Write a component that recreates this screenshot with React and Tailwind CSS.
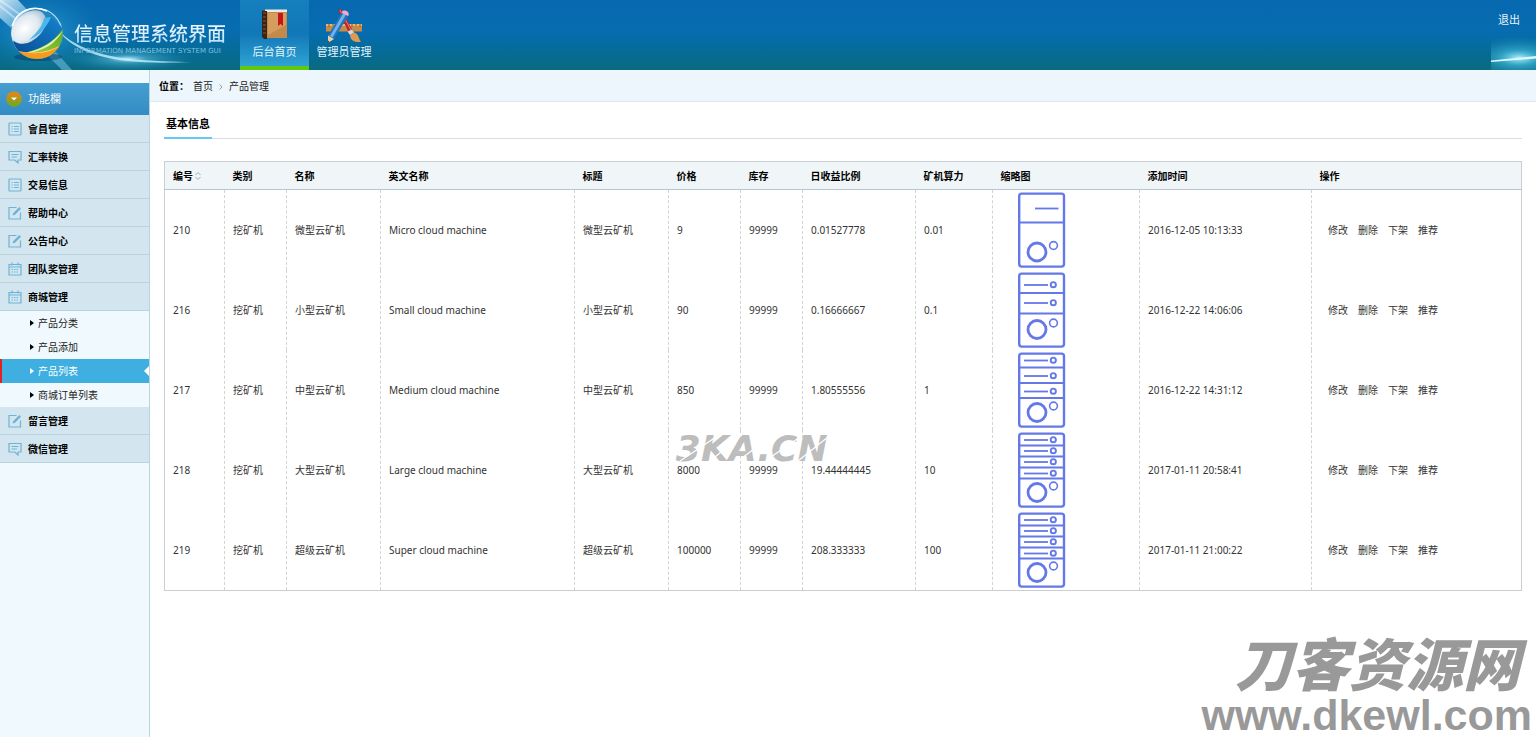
import React, { useState } from 'react'

const menu = [
  { title: '會員管理', icon: 'list' },
  { title: '汇率转换', icon: 'comment' },
  { title: '交易信息', icon: 'list' },
  { title: '帮助中心', icon: 'edit' },
  { title: '公告中心', icon: 'edit' },
  { title: '团队奖管理', icon: 'calendar' },
  {
    title: '商城管理',
    icon: 'calendar',
    children: ['产品分类', '产品添加', '产品列表', '商城订单列表'],
  },
  { title: '留言管理', icon: 'edit' },
  { title: '微信管理', icon: 'comment' },
];

const columns = [
  { label: '编号', width: 'w-[60px]' },
  { label: '类别', width: 'w-[62px]' },
  { label: '名称', width: 'w-[94px]' },
  { label: '英文名称', width: 'w-[194px]' },
  { label: '标题', width: 'w-[94px]' },
  { label: '价格', width: 'w-[72px]' },
  { label: '库存', width: 'w-[62px]' },
  { label: '日收益比例', width: 'w-[113px]' },
  { label: '矿机算力', width: 'w-[77px]' },
  { label: '缩略图', width: 'w-[147px]' },
  { label: '添加时间', width: 'w-[172px]' },
  { label: '操作', width: 'w-[210px]' },
];

const products = [
  { id: 210, name: '微型云矿机', en: 'Micro cloud machine', price: '9', rate: '0.01527778', power: '0.01', time: '2016-12-05 10:13:33' },
  { id: 216, name: '小型云矿机', en: 'Small cloud machine', price: '90', rate: '0.16666667', power: '0.1', time: '2016-12-22 14:06:06' },
  { id: 217, name: '中型云矿机', en: 'Medium cloud machine', price: '850', rate: '1.80555556', power: '1', time: '2016-12-22 14:31:12' },
  { id: 218, name: '大型云矿机', en: 'Large cloud machine', price: '8000', rate: '19.44444445', power: '10', time: '2017-01-11 20:58:41' },
  { id: 219, name: '超级云矿机', en: 'Super cloud machine', price: '100000', rate: '208.333333', power: '100', time: '2017-01-11 21:00:22' },
];

// drive bays of each machine: divider lines, slot rows and fan positions
const machines = {
  210: { dividers: [32.5], slots: [], fan: 62, led: 55.5 },
  216: { dividers: [23, 43.5], slots: [15, 33], fan: 59.5, led: 53 },
  217: { dividers: [17.5, 33, 48], slots: [10.5, 26, 41.5], fan: 62.5, led: 56 },
  218: { dividers: [15.5, 26.5, 37.5, 48.5], slots: [10, 21, 32, 43.5], fan: 62.5, led: 56 },
  219: { dividers: [15.5, 26.5, 37.5, 48.5], slots: [10, 21, 32, 43.5], fan: 62.5, led: 56 },
};

const MachineIcon = ({ id }) => {
  const m = machines[id];
  return (
    <svg viewBox="0 0 80 80" className="block size-20" fill="none" stroke="#6478e8">
      <rect x="18.2" y="3.6" width="44.8" height="73" rx="2.5" strokeWidth="2.4" />
      {m.dividers.map(y => <path key={y} d={`M18 ${y}h45`} strokeWidth="2" />)}
      {m.slots.length === 0 && <path d="M34 18.5h23.5" strokeWidth="1.8" />}
      {m.slots.map(y => (
        <g key={y}>
          <path d={`M23 ${y}h24`} strokeWidth="1.8" />
          <circle cx="52.3" cy={y - 0.3} r="2.6" strokeWidth="1.9" />
        </g>
      ))}
      <circle cx="36" cy={m.fan} r="9" strokeWidth="2.8" />
      <circle cx="52.5" cy={m.led} r="3.9" strokeWidth="1.6" />
    </svg>
  );
};

const MenuIcon = ({ type }) => (
  <svg viewBox="0 0 14 14" className="size-3.5 shrink-0" fill="none" stroke="#6fb3d5" strokeWidth="1.2">
    {type === 'list' && (
      <>
        <rect x="1" y="1" width="12" height="12" rx="0.8" />
        <path d="M3.5 4.5h1.3M6 4.5h4.8M3.5 7h1.3M6 7h4.8M3.5 9.5h1.3M6 9.5h4.8" />
      </>
    )}
    {type === 'comment' && (
      <>
        <path d="M1 1.5h12v8.5h-3v3l-3.2-3H1z" />
        <path d="M3.5 4.5h7M3.5 7h5.5" />
      </>
    )}
    {type === 'edit' && (
      <>
        <path d="M8.5 1.5H1v11.5h11.5V6.5" />
        <path d="M4.5 9.5l.8-2.5 6-6 1.7 1.7-6 6z" fill="#6fb3d5" stroke="none" />
      </>
    )}
    {type === 'calendar' && (
      <>
        <path d="M1 2.5h12V13H1zM1 5h12M4 .5v3M10 .5v3" />
        <path d="M3.5 7.5h7M3.5 10h7" strokeDasharray="1.5 1" />
      </>
    )}
  </svg>
);

const Logo = () => (
  <svg viewBox="0 0 240 70" className="absolute left-0 top-0 h-[70px] w-60">
    <defs>
      <linearGradient id="beam" x1="0" y1="0" x2="1" y2="1">
        <stop offset="0" stopColor="#e6f6ff" stopOpacity="0.85" />
        <stop offset="1" stopColor="#6cc6ee" stopOpacity="0.15" />
      </linearGradient>
      <radialGradient id="glow">
        <stop offset="0" stopColor="#c9f4ff" stopOpacity="0.95" />
        <stop offset="0.3" stopColor="#5fc3e2" stopOpacity="0.5" />
        <stop offset="1" stopColor="#1a86b4" stopOpacity="0" />
      </radialGradient>
      <radialGradient id="halo">
        <stop offset="0" stopColor="#2fa5dd" stopOpacity="0.8" />
        <stop offset="1" stopColor="#1a86b4" stopOpacity="0" />
      </radialGradient>
      <radialGradient id="glass" cx="0.4" cy="0.45" r="0.65">
        <stop offset="0" stopColor="#fff" />
        <stop offset="0.6" stopColor="#e0e9f0" />
        <stop offset="1" stopColor="#9bb8cf" />
      </radialGradient>
      <linearGradient id="blue" x1="1" y1="0" x2="0" y2="1">
        <stop offset="0" stopColor="#1584cf" />
        <stop offset="1" stopColor="#07458c" />
      </linearGradient>
      <linearGradient id="green" x1="1" y1="0" x2="0" y2="1">
        <stop offset="0" stopColor="#5aa81c" />
        <stop offset="1" stopColor="#a9d645" />
      </linearGradient>
      <clipPath id="ball"><circle cx="37" cy="33.5" r="25.5" /></clipPath>
    </defs>
    <ellipse cx="40" cy="32" rx="62" ry="42" fill="url(#halo)" />
    <path d="M0 0h18L46 30 20 36 0 18z" fill="url(#beam)" />
    <path d="M0 6l22 18M0 0l30 22" stroke="#fff" strokeOpacity="0.4" strokeWidth="2" />
    <ellipse cx="128" cy="59" rx="66" ry="13" fill="url(#glow)" />
    <path d="M60 32c14 14 40 24 70 27 22 2 44 3 62 3-24 1-46 1-64-1-32-3-58-14-68-29z" fill="#c5efff" fillOpacity="0.8" />
    <path d="M48 56l14 14h10L56 52z" fill="#7fc8e8" fillOpacity="0.5" />
    <ellipse cx="38" cy="57" rx="24" ry="4" fill="#043b66" fillOpacity="0.5" />
    <circle cx="37" cy="33.5" r="25" fill="#2b8cc9" fillOpacity="0.55" stroke="#d8f0fb" strokeOpacity="0.85" strokeWidth="1.2" />
    <g clipPath="url(#ball)">
      <path d="M9 40c9 5 27-1 36-22l6-1 13 12v32H10z" fill="url(#blue)" />
      <path d="M28 52c15-4 27-11 35-24v30H26z" fill="url(#green)" />
      <path d="M27 52.5c14-3 26-10 36-22-8 14-19 20-36 23z" fill="#e3f3b8" />
      <path d="M15 50c16 5 34 3 49-7v18H18z" fill="#f59a1e" />
      <path d="M15 50c16 5 34 3 49-7-13 11-32 13-49 7z" fill="#fbd98c" />
    </g>
    <ellipse cx="28.5" cy="27" rx="20" ry="13.5" transform="rotate(-42 28.5 27)" fill="url(#glass)" />
    <path d="M34 35c5-5 9-11 10-17l7-1c-4 10-11 18-22 23z" fill="#48b7e9" />
    <path d="M12 26C17 11 32 4 47 11" stroke="#fff" strokeWidth="1.5" fill="none" />
  </svg>
);

const BookIcon = () => (
  <svg viewBox="0 0 32 34" className="h-[34px] w-8">
    <path d="M3 2.5h24l1 1.5v26H5l-2-2z" fill="#5c3514" />
    <path d="M6 1.5h22v3H6z" fill="#efebe3" />
    <path d="M8 4h20v26H8z" fill="#c58a4b" />
    <path d="M9 5h18v12L9 27z" fill="#dba566" fillOpacity="0.7" />
    <path d="M3 3h5v28H5l-2-2z" fill="#3c2413" />
    <path d="M4 5h3M4 9h3M4 13h3M4 17h3M4 21h3M4 25h3" stroke="#7a5a40" />
    <path d="M19 5h5v13l-2.5-2-2.5 2z" fill="#c5161b" />
  </svg>
);

const ToolsIcon = () => (
  <svg viewBox="0 0 38 36" className="h-9 w-[38px]">
    <path d="M1 16h36v7.5H1z" fill="#c78b43" />
    <path d="M1 16h36v2H1z" fill="#e5b673" />
    <path d="M4 16v3M8 16v2M12 16v3M27 16v3M31 16v2M35 16v3" stroke="#8a5d2b" />
    <path d="M13 2l3-1 12 22-4 2z" fill="#c4232b" />
    <path d="M15 2l11 20" stroke="#ef7d75" />
    <path d="M22.5 23.5l4.5-2 2 3-4 2.5z" fill="#d5d9dc" />
    <path d="M25 27l4-2.5c5 1 4 6 7 9-5 2-11-1-11-6.5z" fill="#dc9a52" />
    <path d="M17 4l6.5 3.5L9 31l-6-3.5z" fill="#2373bd" />
    <path d="M18.5 5L5 28l2.5 1.5L21 6.5z" fill="#6fb2ec" />
    <path d="M17 4c1-3 8-1 6.5 3.5L23 8l-6-3z" fill="#f3a9c8" />
    <path d="M3 27.5L9 31l-6 4z" fill="#efcfa0" />
    <path d="M3 32.5l1.5 1.5L3 35z" fill="#333" />
  </svg>
);

const Header = () => (
  <header className="relative flex h-[70px] items-start bg-linear-to-b from-[#0769b0] via-[#076cb0] via-45% to-[#0a6a80]">
    <div className="relative h-full w-60 shrink-0">
      <Logo />
      <div className="relative pl-[74px] pt-5">
        <h1 className="bg-linear-to-b from-white to-[#a9d9f4] bg-clip-text text-[19px] leading-7 font-medium text-transparent">信息管理系统界面</h1>
        <p className="font-['DejaVu_Sans',sans-serif] text-[7px] leading-[6px] whitespace-nowrap text-[#7fc0de]">INFORMATION MANAGEMENT SYSTEM GUI</p>
      </div>
    </div>
    <nav className="flex h-full text-[11px] leading-4 text-[#e2f3fc]">
      <a href="#home" className="flex w-[69px] flex-col items-center border-b-4 border-[#5fc90e] bg-linear-to-b from-[#1580bd] via-[#1177b8] to-[#2fa3d3] pt-2">
        <BookIcon />
        <span className="mt-0.5">后台首页</span>
      </a>
      <a href="#admin" className="flex w-[70px] flex-col items-center pt-2">
        <ToolsIcon />
        <span>管理员管理</span>
      </a>
    </nav>
    <div className="relative ml-auto h-full w-[45px]">
      <svg viewBox="0 0 45 70" className="absolute inset-0 size-full">
        <defs>
          <radialGradient id="flare">
            <stop offset="0" stopColor="#aef0ff" />
            <stop offset="0.35" stopColor="#3fb5d6" stopOpacity="0.7" />
            <stop offset="1" stopColor="#1a86b4" stopOpacity="0" />
          </radialGradient>
        </defs>
        <ellipse cx="28" cy="58" rx="56" ry="22" fill="url(#flare)" />
        <path d="M0 60.5L45 56v2.5L0 62z" fill="#d9f8ff" />
      </svg>
      <a href="#logout" className="relative block pt-3 pl-[7px] text-[11px] leading-4 text-[#e9f3f7]">退出</a>
    </div>
  </header>
);

const Sidebar = () => {
  const [active, setActive] = useState('产品列表');
  return (
    <aside className="w-[150px] shrink-0 border-r border-[#b7d5df] bg-[#f0f9fd] pt-[13px]">
      <div className="flex h-8 items-center bg-linear-to-b from-[#469fd0] to-[#338bc5] pl-1.5 text-[11px] text-white">
        <svg viewBox="0 0 16 16" className="mr-1.5 size-4">
          <defs>
            <linearGradient id="knob" x1="0" y1="0" x2="0" y2="1">
              <stop offset="0.2" stopColor="#d68a1c" />
              <stop offset="0.9" stopColor="#74a81c" />
            </linearGradient>
          </defs>
          <circle cx="8" cy="8" r="7.8" fill="url(#knob)" />
          <path d="M5 6.5h6L8 9.5z" fill="#fff" />
        </svg>
        功能欄
      </div>
      <ul>
        {menu.map(item => (
          <li key={item.title}>
            <a href="#menu" className="flex h-7 items-center gap-1.5 border-b border-[#b9d4df] bg-[#d3e6ef] pt-px pl-2 text-[10px] font-bold text-black">
              <MenuIcon type={item.icon} />
              {item.title}
            </a>
            {item.children && (
              <ul>
                {item.children.map(child => (
                  <li key={child}>
                    <a
                      href="#list"
                      onClick={() => setActive(child)}
                      className={`relative flex h-6 items-center border-l-2 pl-7 text-[10px] ${
                        active === child ? 'border-[#e02222] bg-[#3eafe0] text-white' : 'border-transparent text-[#222]'
                      }`}
                    >
                      <svg viewBox="0 0 4 6" className="mr-1 h-1.5 w-1" fill={active === child ? '#fff' : '#000'}><path d="M0 0l4 3-4 3z" /></svg>
                      {child}
                      {active === child && (
                        <svg viewBox="0 0 5 10" className="absolute right-0 h-2.5 w-[5px]"><path d="M5 0v10L0 5z" fill="#fff" /></svg>
                      )}
                    </a>
                  </li>
                ))}
              </ul>
            )}
          </li>
        ))}
      </ul>
    </aside>
  );
};

const ProductTable = () => (
  <table className="mt-[22px] w-full table-fixed border-collapse border border-[#c9cfd4] text-[10px] leading-4 text-[#333]">
    <thead>
      <tr className="h-7 border-b border-[#b6c6d6] bg-[#f0f5f7] text-black">
        {columns.map((col, i) => (
          <th key={col.label} className={`${col.width} p-0 pl-2 text-left font-bold whitespace-nowrap`}>
            {col.label}
            {i === 0 && (
              <svg viewBox="0 0 6 8" className="ml-0.5 inline h-2 w-1.5 align-baseline" fill="none" stroke="#8d989e" strokeWidth="0.8">
                <path d="M.5 3L3 .5 5.5 3M.5 5L3 7.5 5.5 5" />
              </svg>
            )}
          </th>
        ))}
      </tr>
    </thead>
    <tbody>
      {products.map(p => (
        <tr key={p.id} className="h-20 [&>td]:border-r [&>td]:border-dashed [&>td]:border-[#d2d2d2] [&>td]:p-0 [&>td]:pl-2 [&>td]:whitespace-nowrap">
          <td>{p.id}</td>
          <td>挖矿机</td>
          <td>{p.name}</td>
          <td>{p.en}</td>
          <td>{p.name}</td>
          <td>{p.price}</td>
          <td>99999</td>
          <td>{p.rate}</td>
          <td>{p.power}</td>
          <td><MachineIcon id={p.id} /></td>
          <td>{p.time}</td>
          <td>
            <div className="flex gap-2.5 pl-2">
              <a href="#edit">修改</a>
              <a href="#delete">删除</a>
              <a href="#off">下架</a>
              <a href="#recommend">推荐</a>
            </div>
          </td>
        </tr>
      ))}
    </tbody>
  </table>
);

export default function App() {
  return (
    <div className="relative flex min-h-screen flex-col overflow-hidden bg-white font-['Noto_Sans','Noto_Sans_CJK_SC',sans-serif]">
      <Header />
      <div className="flex flex-1">
        <Sidebar />
        <main className="min-w-0 flex-1">
          <div className="flex h-8 items-center border-b border-[#d9eaf2] bg-[#edf6fc] pt-0.5 pl-[9px] text-[10px] text-[#222]">
            <span className="w-[34px] font-bold text-black">位置：</span>
            <a href="#home">首页</a>
            <svg viewBox="0 0 4 6" className="mx-1.5 h-1.5 w-1" fill="none" stroke="#8fa3ad"><path d="M.5.5L3 3 .5 5.5" /></svg>
            <a href="#products">产品管理</a>
          </div>
          <div className="px-3.5">
            <div className="mt-2 flex border-b border-[#d6dee1]">
              <h2 className="-mb-px border-b-2 border-[#66c9f3] px-0.5 pt-1 pb-[3px] text-[11px] leading-5 font-bold text-black">基本信息</h2>
            </div>
            <ProductTable />
          </div>
        </main>
      </div>

      <div className="pointer-events-none absolute top-[429px] left-[44%] font-['DejaVu_Sans',sans-serif] text-[36px] leading-10 font-bold text-[#bdbdbd] italic">
        3KA.CN
        <svg viewBox="0 0 160 40" className="absolute top-0 left-0 h-10 w-40" stroke="#fff" strokeWidth="1.2">
          <path d="M4 32L40 8M34 32l32-26M62 32l32-24M92 30l32-22M122 32l30-24" />
        </svg>
      </div>
      <div className="pointer-events-none absolute right-1 bottom-0 flex flex-col items-end text-[#999]">
        <p className="pr-3 text-[57px] leading-[58px] font-black italic">刀客资源网</p>
        <p className="font-['Liberation_Sans',sans-serif] text-[43px] leading-[44px] font-bold">www.dkewl.com</p>
      </div>
    </div>
  )
}
